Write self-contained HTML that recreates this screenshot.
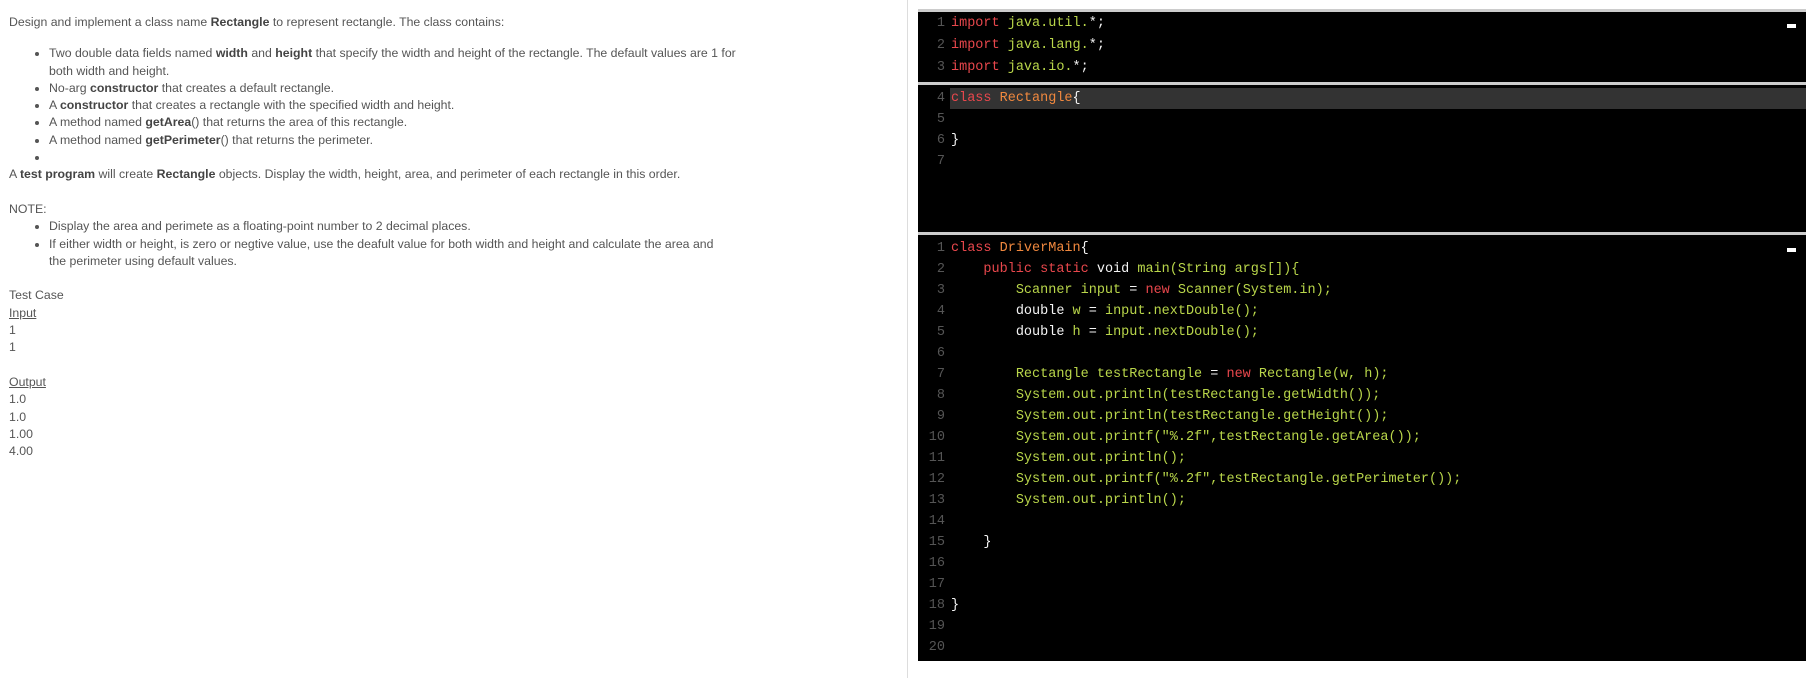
<!DOCTYPE html>
<html><head><meta charset="utf-8"><style>
*{margin:0;padding:0;box-sizing:border-box}
body{width:1816px;height:678px;background:#fff;position:relative;overflow:hidden;font-family:"Liberation Sans",sans-serif;color:#555;font-size:12.3px}
.left{position:absolute;left:9px;top:14px;width:892px;line-height:17.3px}
.left b{color:#444}
ul{margin-left:40px;list-style:disc;width:860px}
p{margin:0}
u{text-decoration:underline}
.div{position:absolute;left:907px;top:0;width:1px;height:678px;background:#ddd}
.panel{position:absolute;left:918px;width:888px;background:#000;font-family:"Liberation Mono",monospace;font-size:13.5px}
.ln{position:absolute;left:0;height:21px;line-height:21px;width:100%;white-space:pre;color:#ddd}
.n{display:inline-block;width:27px;text-align:right;color:#555;margin-right:6px}
.k{color:#e8474c}.g{color:#b9d64a}.o{color:#f0883e}.w{color:#f4f4f4}
.min{position:absolute;right:10px;width:9px;height:4px;background:#fff}
.sep{position:absolute;left:918px;width:888px;height:3px;background:#ccc}
</style></head><body>
<div class="left">
<p>Design and implement a class name <b>Rectangle</b> to represent rectangle. The class contains:</p>
<p style="height:14px"></p>
<ul>
<li>Two double data fields named <b>width</b> and <b>height</b> that specify the width and height of the rectangle. The default values are 1 for<br>both width and height.</li>
<li>No-arg <b>constructor</b> that creates a default rectangle.</li>
<li>A <b>constructor</b> that creates a rectangle with the specified width and height.</li>
<li>A method named <b>getArea</b>() that returns the area of this rectangle.</li>
<li>A method named <b>getPerimeter</b>() that returns the perimeter.</li>
<li>&nbsp;</li>
</ul>
<p>A <b>test program</b> will create <b>Rectangle</b> objects. Display the width, height, area, and perimeter of each rectangle in this order.</p>
<p>&nbsp;</p>
<p>NOTE:</p>
<ul>
<li>Display the area and perimete as a floating-point number to 2 decimal places.</li>
<li>If either width or height, is zero or negtive value, use the deafult value for both width and height and calculate the area and<br>the perimeter using default values.</li>
</ul>
<p>&nbsp;</p>
<p>Test Case</p>
<p><u>Input</u></p>
<p>1</p><p>1</p><p>&nbsp;</p>
<p><u>Output</u></p>
<p>1.0</p><p>1.0</p><p>1.00</p><p>4.00</p>
</div>
<div class="div"></div>

<div class="sep" style="top:9px"></div>
<div class="panel" style="top:12px;height:70px">
<div class="min" style="top:12px"></div>
<div class="ln" style="top:1px"><span class="n">1</span><span class="k">import</span> <span class="g">java.util.</span><span class="w">*;</span></div>
<div class="ln" style="top:23px"><span class="n">2</span><span class="k">import</span> <span class="g">java.lang.</span><span class="w">*;</span></div>
<div class="ln" style="top:45px"><span class="n">3</span><span class="k">import</span> <span class="g">java.io.</span><span class="w">*;</span></div>
</div>
<div class="sep" style="top:82px"></div>
<div class="panel" style="top:85px;height:147px">
<div style="position:absolute;left:32px;top:3px;right:0;height:21px;background:#333"></div>
<div class="ln" style="top:3px"><span class="n">4</span><span class="k">class</span> <span class="o">Rectangle</span><span class="w">{</span></div>
<div class="ln" style="top:24px"><span class="n">5</span></div>
<div class="ln" style="top:45px"><span class="n">6</span><span class="w">}</span></div>
<div class="ln" style="top:66px"><span class="n">7</span></div>
</div>
<div class="sep" style="top:232px"></div>
<div class="panel" style="top:235px;height:426px">
<div class="min" style="top:13px"></div>
<div class="ln" style="top:3px"><span class="n">1</span><span class="k">class</span> <span class="o">DriverMain</span><span class="w">{</span></div>
<div class="ln" style="top:24px"><span class="n">2</span>    <span class="k">public</span> <span class="k">static</span> <span class="w">void</span> <span class="g">main(String args[]){</span></div>
<div class="ln" style="top:45px"><span class="n">3</span>        <span class="g">Scanner input</span> <span class="w">=</span> <span class="k">new</span> <span class="g">Scanner(System.in);</span></div>
<div class="ln" style="top:66px"><span class="n">4</span>        <span class="w">double</span> <span class="g">w</span> <span class="w">=</span> <span class="g">input.nextDouble();</span></div>
<div class="ln" style="top:87px"><span class="n">5</span>        <span class="w">double</span> <span class="g">h</span> <span class="w">=</span> <span class="g">input.nextDouble();</span></div>
<div class="ln" style="top:108px"><span class="n">6</span></div>
<div class="ln" style="top:129px"><span class="n">7</span>        <span class="g">Rectangle testRectangle</span> <span class="w">=</span> <span class="k">new</span> <span class="g">Rectangle(w, h);</span></div>
<div class="ln" style="top:150px"><span class="n">8</span>        <span class="g">System.out.println(testRectangle.getWidth());</span></div>
<div class="ln" style="top:171px"><span class="n">9</span>        <span class="g">System.out.println(testRectangle.getHeight());</span></div>
<div class="ln" style="top:192px"><span class="n">10</span>        <span class="g">System.out.printf("%.2f",testRectangle.getArea());</span></div>
<div class="ln" style="top:213px"><span class="n">11</span>        <span class="g">System.out.println();</span></div>
<div class="ln" style="top:234px"><span class="n">12</span>        <span class="g">System.out.printf("%.2f",testRectangle.getPerimeter());</span></div>
<div class="ln" style="top:255px"><span class="n">13</span>        <span class="g">System.out.println();</span></div>
<div class="ln" style="top:276px"><span class="n">14</span></div>
<div class="ln" style="top:297px"><span class="n">15</span>    <span class="w">}</span></div>
<div class="ln" style="top:318px"><span class="n">16</span></div>
<div class="ln" style="top:339px"><span class="n">17</span></div>
<div class="ln" style="top:360px"><span class="n">18</span><span class="w">}</span></div>
<div class="ln" style="top:381px"><span class="n">19</span></div>
<div class="ln" style="top:402px"><span class="n">20</span></div>
</div>
</body></html>
